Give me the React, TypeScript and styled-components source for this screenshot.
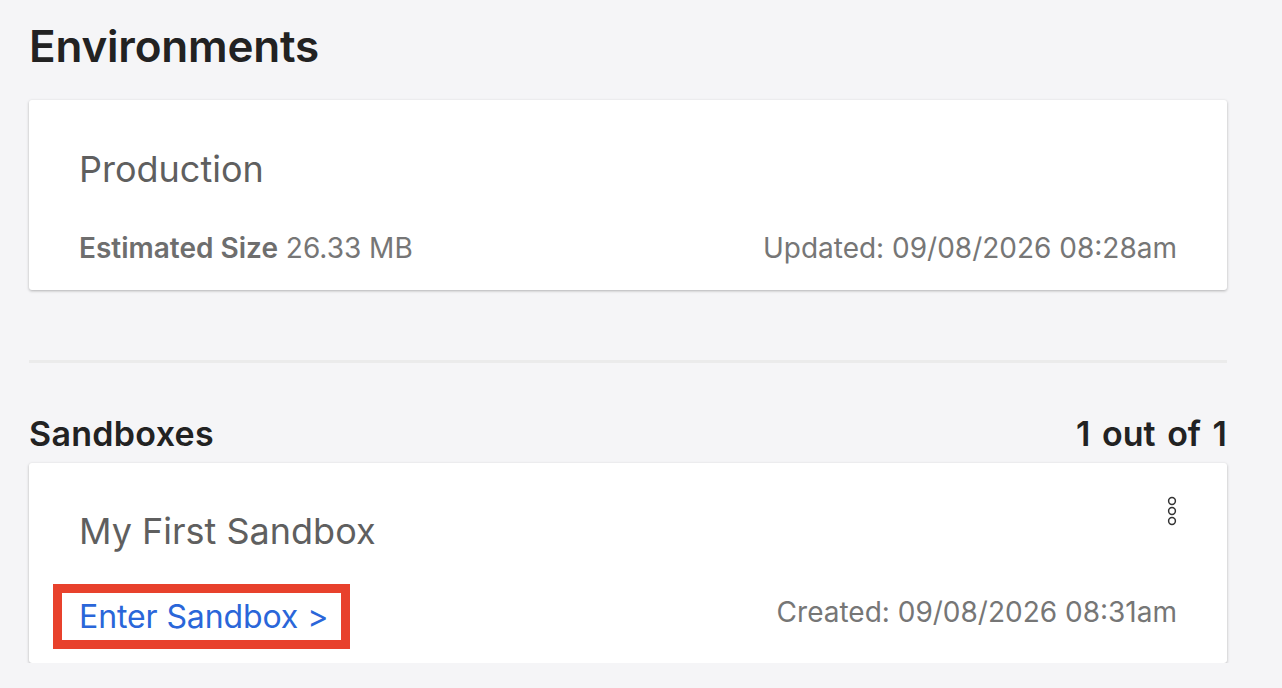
import React from "react";
import styled, { createGlobalStyle } from "styled-components";

const GlobalStyle = createGlobalStyle`
	body {
		margin: 0;
		background: #f5f5f7;
		font-family: Inter, "Noto Sans", sans-serif;
		color: #222;
	}
`;

const Page = styled.div`
	padding: 18px 55px 0 29px;
	display: flex;
	flex-direction: column;
`;

const Title = styled.h1`
	margin: 0 0 26px;
	font-size: 44px;
	font-weight: 600;
	line-height: 56px;
	color: #222;
	letter-spacing: -0.2px;
`;

const Card = styled.div<{ $pad: string; $gap: number }>`
	background: #fff;
	border-radius: 3px;
	box-shadow: 0 1px 3px rgba(0, 0, 0, 0.28);
	padding: ${p => p.$pad};
	position: relative;
	display: flex;
	flex-direction: column;
	gap: ${p => p.$gap}px;
`;

const CardName = styled.div`
	font-size: 36px;
	line-height: 48px;
	color: #5f5f5f;
`;

const Meta = styled.div`
	display: flex;
	justify-content: space-between;
	align-items: center;
	font-size: 28px;
	color: #767676;
	line-height: 40px;

	b {
		font-weight: 600;
		color: #6e6e6e;
	}
`;

const DateText = styled.span<{ $lift?: number }>`
	padding-bottom: ${p => p.$lift ?? 0}px;
`;

const Divider = styled.hr`
	border: none;
	height: 3px;
	background: #ebebeb;
	margin: 70px 0 0;
`;

const SectionHead = styled.div`
	display: flex;
	justify-content: space-between;
	align-items: center;
	font-size: 34px;
	font-weight: 600;
	line-height: 40px;
	margin: 51px 0 9px;
	color: #222;
`;

const Heading = styled.span`
	letter-spacing: 0.3px;
`;

const Count = styled.span`
	word-spacing: 3px;
`;

const MenuButton = styled.button`
	position: absolute;
	top: 33px;
	right: 49px;
	border: none;
	background: none;
	padding: 0;
	cursor: pointer;
	display: flex;
`;

const EnterLink = styled.a`
	display: inline-block;
	border: 9px solid #e8412c;
	padding: 0 13px 0 17px;
	margin-left: -26px;
	font-size: 32px;
	line-height: 47px;
	color: #2a66d9;
	text-decoration: none;
	letter-spacing: -0.1px;
	cursor: pointer;
`;

const Kebab = () => (
	<svg width="12" height="30" viewBox="0 0 12 30" fill="none" stroke="#333" strokeWidth="1.5">
		<circle cx="6" cy="5" r="3.4" />
		<circle cx="6" cy="15" r="3.4" />
		<circle cx="6" cy="25" r="3.4" />
	</svg>
);

export default function App() {
	return (
		<>
			<GlobalStyle />
			<Page>
				<Title>Environments</Title>
				<Card $pad="45px 50px 22px" $gap={35}>
					<CardName>Production</CardName>
					<Meta>
						<span>
							<b>Estimated Size</b> 26.33 MB
						</span>
						<DateText>Updated: 09/08/2026 08:28am</DateText>
					</Meta>
				</Card>
				<Divider />
				<SectionHead>
					<Heading>Sandboxes</Heading>
					<Count>1 out of 1</Count>
				</SectionHead>
				<Card $pad="44px 50px 14px" $gap={29}>
					<MenuButton aria-label="More">
						<Kebab />
					</MenuButton>
					<CardName>My First Sandbox</CardName>
					<Meta>
						<EnterLink>Enter Sandbox &gt;</EnterLink>
						<DateText $lift={9}>Created: 09/08/2026 08:31am</DateText>
					</Meta>
				</Card>
			</Page>
		</>
	);
}
